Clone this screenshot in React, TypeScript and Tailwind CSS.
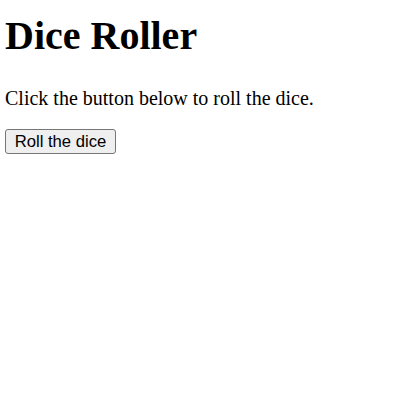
export default function App() {
  return (
    <div className="min-h-screen bg-white px-[5px] pt-[13px] text-black">
      <h1 className="mb-[28px] font-['Liberation_Serif',serif] text-[40px] font-bold leading-[46px]">
        Dice Roller
      </h1>
      <p className="mb-[19px] font-['Liberation_Serif',serif] text-[20px] leading-[23px]">
        Click the button below to roll the dice.
      </p>
      <button className="flex h-[25px] w-[111px] items-center justify-center rounded-[3px] border border-[#767676] bg-[#efefef] font-['Liberation_Sans',Arial,sans-serif] text-[16.67px] leading-[19px] text-black">
        Roll the dice
      </button>
    </div>
  );
}
